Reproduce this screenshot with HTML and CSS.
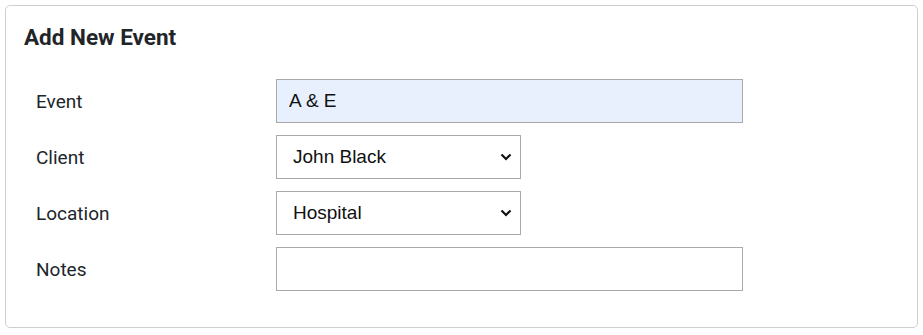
FILE: index.html
```html
<!DOCTYPE html>
<html>
<head>
<meta charset="utf-8">
<link rel="stylesheet" href="styles.css">
</head>
<body>
<div class="card">
  <h2 class="title">Add New Event</h2>
  <form class="form">
    <div class="row">
      <label class="label">Event</label>
      <input class="field field-wide filled" type="text" value="A &amp; E">
    </div>
    <div class="row">
      <label class="label">Client</label>
      <div class="select">
        <span class="select-text">John Black</span>
        <svg class="chev" width="12" height="8" viewBox="0 0 12 8"><path d="M1.5 1.5 L6 6 L10.5 1.5" fill="none" stroke="#111" stroke-width="2.2"/></svg>
      </div>
    </div>
    <div class="row">
      <label class="label">Location</label>
      <div class="select">
        <span class="select-text">Hospital</span>
        <svg class="chev" width="12" height="8" viewBox="0 0 12 8"><path d="M1.5 1.5 L6 6 L10.5 1.5" fill="none" stroke="#111" stroke-width="2.2"/></svg>
      </div>
    </div>
    <div class="row">
      <label class="label">Notes</label>
      <input class="field field-wide" type="text" value="">
    </div>
  </form>
</div>
</body>
</html>
```
FILE: styles.css
```css
html, body { margin: 0; padding: 0; background: #fff; }
body { padding: 5px; }
.card {
  width: 913px;
  height: 323px;
  box-sizing: border-box;
  border: 1px solid #cfcfcf;
  border-radius: 5px;
  padding: 19px 18px 0 18px;
}
.title {
  margin: 0;
  font-family: Roboto, sans-serif;
  font-weight: 700;
  font-size: 22.5px;
  line-height: 24px;
  color: #212529;
}
.form {
  margin-top: 30px;
  padding-left: 12px;
  display: flex;
  flex-direction: column;
  gap: 12px;
}
.row {
  display: flex;
  align-items: center;
}
.label {
  width: 240px;
  font-family: Roboto, sans-serif;
  font-size: 19px;
  color: #212529;
}
.field {
  box-sizing: border-box;
  height: 44px;
  border: 1px solid #a9a9a9;
  border-radius: 0;
  padding: 0 12px;
  font-family: "Liberation Sans", Arial, sans-serif;
  font-size: 19px;
  color: #111;
  background: #fff;
  outline: none;
  margin: 0;
}
.field-wide { width: 467px; }
.filled { background: #e8f0fe; }
.select {
  box-sizing: border-box;
  width: 245px;
  height: 44px;
  border: 1px solid #a9a9a9;
  display: flex;
  align-items: center;
  justify-content: space-between;
  padding: 0 8px 0 16px;
  font-family: "Liberation Sans", Arial, sans-serif;
  font-size: 19px;
  color: #111;
}
.chev { display: block; }
```
